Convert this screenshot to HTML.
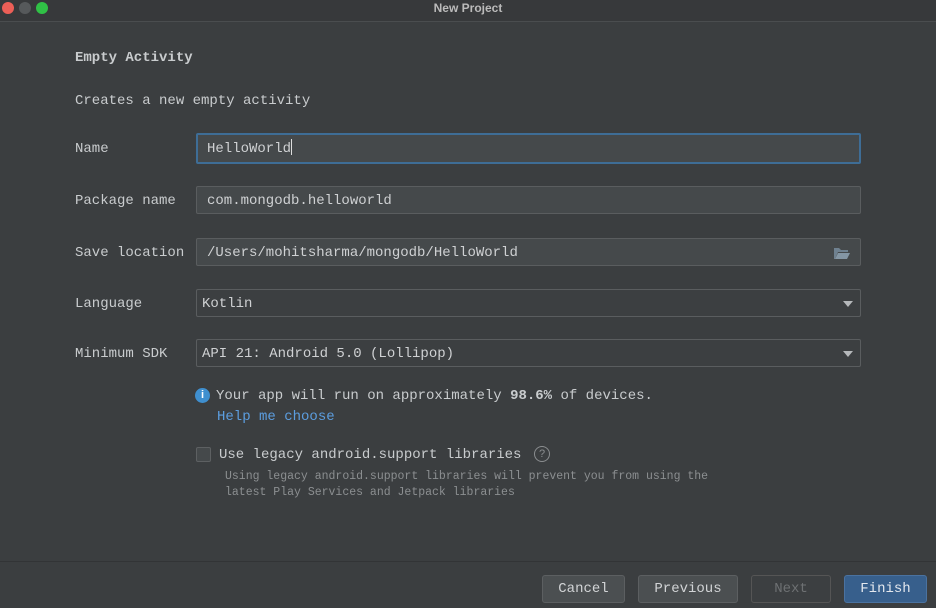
<!DOCTYPE html>
<html><head><style>
body{margin:0;width:936px;height:608px;background:#3b3e40;font-family:"Liberation Mono",monospace;color:#c9ccce;overflow:hidden;position:relative}
.tb{position:absolute;left:0;top:0;width:936px;height:21px;background:#37393b;border-bottom:1px solid #4a4d4f}
.tb .t{position:absolute;left:0;width:936px;text-align:center;top:1px;font:bold 12px "Liberation Sans",sans-serif;color:#bbb}
.dot{position:absolute;top:2px;width:12px;height:12px;border-radius:50%}
.a{position:absolute;font-size:14px;white-space:nowrap}
.f{position:absolute;left:196px;width:665px;height:28px;box-sizing:border-box;border:1px solid #5a5d5f;border-radius:2px;background:#45494b;font-size:14px;line-height:28px;padding-left:10px;color:#cfd1d3}
.dd{background:#3c3f41;padding-left:5px}
.arr{position:absolute;right:7px;top:11px;width:0;height:0;border-left:5px solid transparent;border-right:5px solid transparent;border-top:6px solid #b5b8ba}
.btn{position:absolute;top:575px;height:28px;box-sizing:border-box;border:1px solid #5c5f61;border-radius:3px;background:#4b4f51;text-align:center;line-height:27px;font-size:14px;color:#d2d4d6}
</style></head><body>
<div class="tb"><div class="dot" style="left:2px;background:#ec5f57"></div><div class="dot" style="left:19px;background:#56595b"></div><div class="dot" style="left:36px;background:#30c146"></div><div class="t">New Project</div></div>
<div class="a" style="left:75px;top:50px;font-weight:bold">Empty Activity</div>
<div class="a" style="left:75px;top:93px">Creates a new empty activity</div>
<div class="a" style="left:75px;top:141px">Name</div>
<div class="f" style="top:133px;height:31px;border:2px solid #3e6d96;line-height:29px;padding-left:9px">HelloWorld<span style="display:inline-block;width:1px;height:16px;background:#ddd;vertical-align:-3px"></span></div>
<div class="a" style="left:75px;top:193px">Package name</div>
<div class="f" style="top:186px">com.mongodb.helloworld</div>
<div class="a" style="left:75px;top:245px">Save location</div>
<div class="f" style="top:238px">/Users/mohitsharma/mongodb/HelloWorld
<svg style="position:absolute;right:10px;top:8px" width="16" height="12"><path d="M0 1h5l2 2h7v2H4L1 12H0z" fill="#6f8190"/><path d="M4 6h12l-3 6H1z" fill="#8496a4"/></svg></div>
<div class="a" style="left:75px;top:296px">Language</div>
<div class="f dd" style="top:289px">Kotlin<div class="arr"></div></div>
<div class="a" style="left:75px;top:346px">Minimum SDK</div>
<div class="f dd" style="top:339px">API 21: Android 5.0 (Lollipop)<div class="arr"></div></div>
<div style="position:absolute;left:195px;top:388px;width:15px;height:15px;border-radius:50%;background:#3f8fcf;color:#fff;font:bold 11px 'Liberation Sans',sans-serif;text-align:center;line-height:15px">i</div>
<div class="a" style="left:216px;top:388px">Your app will run on approximately <b>98.6%</b> of devices.</div>
<div class="a" style="left:217px;top:409px;color:#5c9ee0">Help me choose</div>
<div style="position:absolute;left:196px;top:447px;width:15px;height:15px;box-sizing:border-box;border:1px solid #5d6062;border-radius:2px;background:#45494b"></div>
<div class="a" style="left:219px;top:447px">Use legacy android.support libraries</div>
<div style="position:absolute;left:534px;top:446px;width:14px;height:14px;border:1px solid #8a8d8f;border-radius:50%;font:11px 'Liberation Sans',sans-serif;color:#8a8d8f;text-align:center;line-height:14px">?</div>
<div class="a" style="left:225px;top:469px;font-size:11.5px;color:#8c8f91;line-height:16px">Using legacy android.support libraries will prevent you from using the<br>latest Play Services and Jetpack libraries</div>
<div style="position:absolute;left:0;top:561px;width:936px;height:1px;background:#323436"></div>
<div class="btn" style="left:542px;width:83px">Cancel</div>
<div class="btn" style="left:638px;width:100px">Previous</div>
<div class="btn" style="left:751px;width:80px;background:#3c3f41;color:#6e7173;border-color:#555">Next</div>
<div class="btn" style="left:844px;width:83px;background:#375f8c;border-color:#4a72a0;color:#e4e8ee">Finish</div>
</body></html>
